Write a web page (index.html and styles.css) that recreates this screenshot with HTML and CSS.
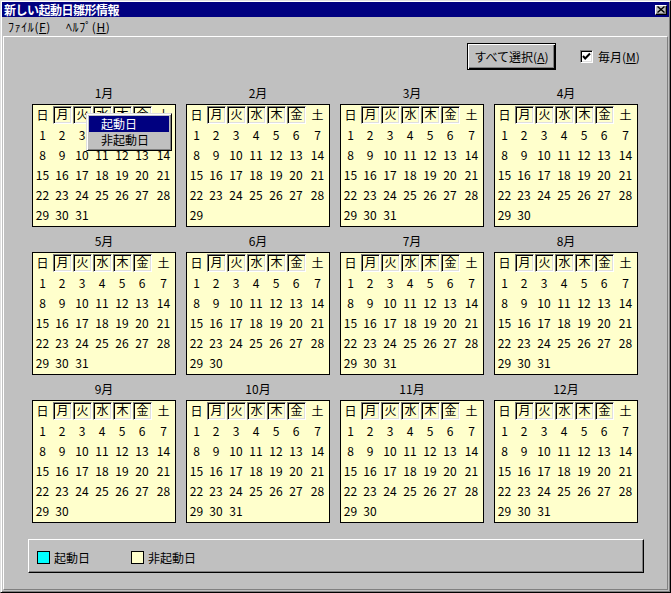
FILE: index.html
```html
<!DOCTYPE html>
<html lang="ja">
<head>
<meta charset="utf-8">
<title>新しい起動日雛形情報</title>
<link rel="stylesheet" href="styles.css">
</head>
<body>
<div class="window">
  <div class="titlebar">
    <span class="title">新しい起動日雛形情報</span>
    <span class="closebtn"><svg width="8" height="7" viewBox="0 0 8 7"><path d="M0.5 0.5 L7.5 6.5 M7.5 0.5 L0.5 6.5" stroke="#000" stroke-width="1.4" fill="none"/></svg></span>
  </div>
  <div class="menubar">
    <span class="menuitem m1">ﾌｧｲﾙ(<u>F</u>)</span>
    <span class="menuitem">ﾍﾙﾌﾟ(<u>H</u>)</span>
  </div>
  <div class="client">
    <div class="toolbar">
      <button class="btn">すべて選択(<u>A</u>)</button>
      <span class="chk"><svg width="9" height="9" viewBox="0 0 9 9"><polyline points="1,4 3.2,6.5 8,1.5" stroke="#000" stroke-width="2" fill="none"/></svg></span>
      <span class="chklabel">毎月(<u>M</u>)</span>
    </div>
    <div class="grid">
      <div class="month"><div class="mlabel">1月</div><div class="cal"><span>日</span><span class="wd">月</span><span class="wd">火</span><span class="wd">水</span><span class="wd">木</span><span class="wd">金</span><span>土</span><span>1</span><span>2</span><span>3</span><span>4</span><span>5</span><span>6</span><span>7</span><span>8</span><span>9</span><span>10</span><span>11</span><span>12</span><span>13</span><span>14</span><span>15</span><span>16</span><span>17</span><span>18</span><span>19</span><span>20</span><span>21</span><span>22</span><span>23</span><span>24</span><span>25</span><span>26</span><span>27</span><span>28</span><span>29</span><span>30</span><span>31</span>
        <div class="popup"><div class="pitem sel">起動日</div><div class="pitem">非起動日</div></div>
      </div></div>
      <div class="month"><div class="mlabel">2月</div><div class="cal"><span>日</span><span class="wd">月</span><span class="wd">火</span><span class="wd">水</span><span class="wd">木</span><span class="wd">金</span><span>土</span><span>1</span><span>2</span><span>3</span><span>4</span><span>5</span><span>6</span><span>7</span><span>8</span><span>9</span><span>10</span><span>11</span><span>12</span><span>13</span><span>14</span><span>15</span><span>16</span><span>17</span><span>18</span><span>19</span><span>20</span><span>21</span><span>22</span><span>23</span><span>24</span><span>25</span><span>26</span><span>27</span><span>28</span><span>29</span></div></div>
      <div class="month"><div class="mlabel">3月</div><div class="cal"><span>日</span><span class="wd">月</span><span class="wd">火</span><span class="wd">水</span><span class="wd">木</span><span class="wd">金</span><span>土</span><span>1</span><span>2</span><span>3</span><span>4</span><span>5</span><span>6</span><span>7</span><span>8</span><span>9</span><span>10</span><span>11</span><span>12</span><span>13</span><span>14</span><span>15</span><span>16</span><span>17</span><span>18</span><span>19</span><span>20</span><span>21</span><span>22</span><span>23</span><span>24</span><span>25</span><span>26</span><span>27</span><span>28</span><span>29</span><span>30</span><span>31</span></div></div>
      <div class="month"><div class="mlabel">4月</div><div class="cal"><span>日</span><span class="wd">月</span><span class="wd">火</span><span class="wd">水</span><span class="wd">木</span><span class="wd">金</span><span>土</span><span>1</span><span>2</span><span>3</span><span>4</span><span>5</span><span>6</span><span>7</span><span>8</span><span>9</span><span>10</span><span>11</span><span>12</span><span>13</span><span>14</span><span>15</span><span>16</span><span>17</span><span>18</span><span>19</span><span>20</span><span>21</span><span>22</span><span>23</span><span>24</span><span>25</span><span>26</span><span>27</span><span>28</span><span>29</span><span>30</span></div></div>
      <div class="month"><div class="mlabel">5月</div><div class="cal"><span>日</span><span class="wd">月</span><span class="wd">火</span><span class="wd">水</span><span class="wd">木</span><span class="wd">金</span><span>土</span><span>1</span><span>2</span><span>3</span><span>4</span><span>5</span><span>6</span><span>7</span><span>8</span><span>9</span><span>10</span><span>11</span><span>12</span><span>13</span><span>14</span><span>15</span><span>16</span><span>17</span><span>18</span><span>19</span><span>20</span><span>21</span><span>22</span><span>23</span><span>24</span><span>25</span><span>26</span><span>27</span><span>28</span><span>29</span><span>30</span><span>31</span></div></div>
      <div class="month"><div class="mlabel">6月</div><div class="cal"><span>日</span><span class="wd">月</span><span class="wd">火</span><span class="wd">水</span><span class="wd">木</span><span class="wd">金</span><span>土</span><span>1</span><span>2</span><span>3</span><span>4</span><span>5</span><span>6</span><span>7</span><span>8</span><span>9</span><span>10</span><span>11</span><span>12</span><span>13</span><span>14</span><span>15</span><span>16</span><span>17</span><span>18</span><span>19</span><span>20</span><span>21</span><span>22</span><span>23</span><span>24</span><span>25</span><span>26</span><span>27</span><span>28</span><span>29</span><span>30</span></div></div>
      <div class="month"><div class="mlabel">7月</div><div class="cal"><span>日</span><span class="wd">月</span><span class="wd">火</span><span class="wd">水</span><span class="wd">木</span><span class="wd">金</span><span>土</span><span>1</span><span>2</span><span>3</span><span>4</span><span>5</span><span>6</span><span>7</span><span>8</span><span>9</span><span>10</span><span>11</span><span>12</span><span>13</span><span>14</span><span>15</span><span>16</span><span>17</span><span>18</span><span>19</span><span>20</span><span>21</span><span>22</span><span>23</span><span>24</span><span>25</span><span>26</span><span>27</span><span>28</span><span>29</span><span>30</span><span>31</span></div></div>
      <div class="month"><div class="mlabel">8月</div><div class="cal"><span>日</span><span class="wd">月</span><span class="wd">火</span><span class="wd">水</span><span class="wd">木</span><span class="wd">金</span><span>土</span><span>1</span><span>2</span><span>3</span><span>4</span><span>5</span><span>6</span><span>7</span><span>8</span><span>9</span><span>10</span><span>11</span><span>12</span><span>13</span><span>14</span><span>15</span><span>16</span><span>17</span><span>18</span><span>19</span><span>20</span><span>21</span><span>22</span><span>23</span><span>24</span><span>25</span><span>26</span><span>27</span><span>28</span><span>29</span><span>30</span><span>31</span></div></div>
      <div class="month"><div class="mlabel">9月</div><div class="cal"><span>日</span><span class="wd">月</span><span class="wd">火</span><span class="wd">水</span><span class="wd">木</span><span class="wd">金</span><span>土</span><span>1</span><span>2</span><span>3</span><span>4</span><span>5</span><span>6</span><span>7</span><span>8</span><span>9</span><span>10</span><span>11</span><span>12</span><span>13</span><span>14</span><span>15</span><span>16</span><span>17</span><span>18</span><span>19</span><span>20</span><span>21</span><span>22</span><span>23</span><span>24</span><span>25</span><span>26</span><span>27</span><span>28</span><span>29</span><span>30</span></div></div>
      <div class="month"><div class="mlabel">10月</div><div class="cal"><span>日</span><span class="wd">月</span><span class="wd">火</span><span class="wd">水</span><span class="wd">木</span><span class="wd">金</span><span>土</span><span>1</span><span>2</span><span>3</span><span>4</span><span>5</span><span>6</span><span>7</span><span>8</span><span>9</span><span>10</span><span>11</span><span>12</span><span>13</span><span>14</span><span>15</span><span>16</span><span>17</span><span>18</span><span>19</span><span>20</span><span>21</span><span>22</span><span>23</span><span>24</span><span>25</span><span>26</span><span>27</span><span>28</span><span>29</span><span>30</span><span>31</span></div></div>
      <div class="month"><div class="mlabel">11月</div><div class="cal"><span>日</span><span class="wd">月</span><span class="wd">火</span><span class="wd">水</span><span class="wd">木</span><span class="wd">金</span><span>土</span><span>1</span><span>2</span><span>3</span><span>4</span><span>5</span><span>6</span><span>7</span><span>8</span><span>9</span><span>10</span><span>11</span><span>12</span><span>13</span><span>14</span><span>15</span><span>16</span><span>17</span><span>18</span><span>19</span><span>20</span><span>21</span><span>22</span><span>23</span><span>24</span><span>25</span><span>26</span><span>27</span><span>28</span><span>29</span><span>30</span></div></div>
      <div class="month"><div class="mlabel">12月</div><div class="cal"><span>日</span><span class="wd">月</span><span class="wd">火</span><span class="wd">水</span><span class="wd">木</span><span class="wd">金</span><span>土</span><span>1</span><span>2</span><span>3</span><span>4</span><span>5</span><span>6</span><span>7</span><span>8</span><span>9</span><span>10</span><span>11</span><span>12</span><span>13</span><span>14</span><span>15</span><span>16</span><span>17</span><span>18</span><span>19</span><span>20</span><span>21</span><span>22</span><span>23</span><span>24</span><span>25</span><span>26</span><span>27</span><span>28</span><span>29</span><span>30</span><span>31</span></div></div>
    </div>
    <div class="legend">
      <span class="swatch on"></span><span class="ltext">起動日</span>
      <span class="swatch off"></span><span class="ltext">非起動日</span>
    </div>
  </div>
</div>
</body>
</html>
```
FILE: styles.css
```css
html, body {
  margin: 0;
  padding: 0;
  background: #c0c0c0;
}
body {
  font-family: "Noto Sans CJK JP", "Noto Sans", sans-serif;
  font-size: 12px;
  color: #000;
}
.window {
  width: 671px;
  height: 593px;
  box-sizing: border-box;
  background: #c0c0c0;
  border-style: solid;
  border-width: 1px;
  border-color: #dfdfdf #000 #000 #dfdfdf;
  box-shadow: inset 1px 1px #fff, inset -1px -1px #808080;
  padding: 1px;
  display: flex;
  flex-direction: column;
}
.titlebar {
  height: 15px;
  background: #000080;
  display: flex;
  align-items: center;
  justify-content: space-between;
  flex-shrink: 0;
}
.title {
  color: #fff;
  font-weight: bold;
  font-size: 12px;
  line-height: 15px;
  padding-left: 2px;
  letter-spacing: -0.5px;
}
.closebtn {
  width: 12px;
  height: 10px;
  box-sizing: border-box;
  margin-right: 2px;
  background: #c0c0c0;
  border-style: solid;
  border-width: 1px;
  border-color: #fff #000 #000 #fff;
  box-shadow: inset -1px -1px #808080;
  display: flex;
  align-items: center;
  justify-content: center;
}
.closebtn svg { display: block; }
.menubar {
  height: 19px;
  display: flex;
  align-items: center;
  flex-shrink: 0;
}
.menuitem {
  line-height: 19px;
  font-size: 12px;
  letter-spacing: 0.6px;
}
.m1 {
  margin-left: 6px;
  width: 58px;
}
.client {
  flex: 1;
  margin: 0 1px 1px 1px;
  border-style: solid;
  border-width: 1px;
  border-color: #fff #808080 #808080 #fff;
  padding: 6px 0 0 24px;
}
.toolbar {
  display: flex;
  align-items: center;
  height: 27px;
}
.btn {
  margin: 0 0 0 439px;
  width: 89px;
  height: 27px;
  box-sizing: border-box;
  padding: 0;
  font-family: "Noto Sans CJK JP", sans-serif;
  font-size: 12px;
  color: #000;
  background: #c0c0c0;
  border: 1px solid #000;
  box-shadow: inset 1px 1px #fff, inset -1px -1px #000, inset -2px -2px #808080;
}
.chk {
  margin-left: 24px;
  width: 13px;
  height: 13px;
  box-sizing: border-box;
  background: #fff;
  border-style: solid;
  border-width: 1px;
  border-color: #808080 #fff #fff #808080;
  box-shadow: inset 1px 1px #000, inset -1px -1px #dfdfdf;
  display: flex;
  align-items: center;
  justify-content: center;
}
.chk svg { display: block; }
.chklabel {
  margin-left: 5px;
}
.grid {
  margin: 12px 0 0 4px;
  display: grid;
  grid-template-columns: repeat(4, 144px);
  column-gap: 10px;
  row-gap: 3px;
}
.mlabel {
  height: 22px;
  line-height: 22px;
  text-align: center;
}
.cal {
  position: relative;
  height: 123px;
  box-sizing: border-box;
  border: 1px solid #000;
  background: #ffffcc;
  display: grid;
  grid-template-columns: 19px repeat(5, 20px) 23px;
  grid-auto-rows: 20px;
  align-content: start;
}
.cal > span {
  text-align: center;
  line-height: 20px;
}
.cal > span.wd {
  margin: 1px 0 1px 1px;
  line-height: 14px;
  border-style: solid;
  border-width: 1px;
  border-color: #808080 #fff #fff #808080;
  box-shadow: inset 1px 1px #000, inset -1px -1px #dfdfdf;
}
.popup {
  position: absolute;
  left: 53px;
  top: 8px;
  width: 86px;
  height: 38px;
  box-sizing: border-box;
  background: #c0c0c0;
  border-style: solid;
  border-width: 1px;
  border-color: #dfdfdf #000 #000 #dfdfdf;
  box-shadow: inset 1px 1px #fff, inset -1px -1px #808080;
  padding: 2px;
}
.pitem {
  height: 16px;
  line-height: 16px;
  padding-left: 12px;
}
.pitem.sel {
  background: #000080;
  color: #fff;
}
.legend {
  margin-top: 16px;
  width: 616px;
  height: 34px;
  box-sizing: border-box;
  border-style: solid;
  border-width: 1px;
  border-color: #fff #000 #000 #fff;
  box-shadow: inset -1px -1px #808080;
  display: flex;
  align-items: center;
  padding: 2px 0 0 8px;
}
.swatch {
  width: 13px;
  height: 13px;
  box-sizing: border-box;
  border: 1px solid #000;
}
.swatch.on { background: #00ffff; }
.swatch.off { background: #ffffcc; margin-left: 41px; }
.ltext {
  margin-left: 4px;
}
```
